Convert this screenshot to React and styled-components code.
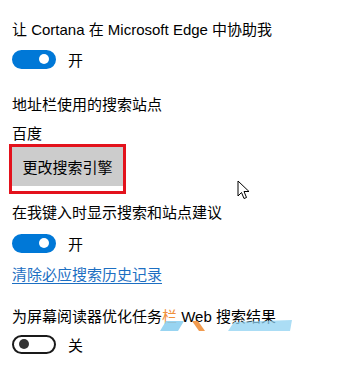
import React from 'react';
import styled, { createGlobalStyle } from 'styled-components';

const Global = createGlobalStyle`
  html, body {
    margin: 0;
    padding: 0;
    background: #fff;
  }
  body {
    font-family: "Liberation Sans", "Noto Sans CJK SC", sans-serif;
    color: #000;
  }
`;

const Page = styled.div`
  position: relative;
  width: 339px;
  height: 367px;
  overflow: hidden;
  padding: 20px 0 0 12px;
  box-sizing: border-box;
  display: flex;
  flex-direction: column;
  align-items: flex-start;
`;

const Label = styled.div`
  position: relative;
  font-size: 15px;
  line-height: 20px;
  height: 20px;
  white-space: nowrap;
  margin-top: ${(p) => p.$top || 0}px;
`;

const Row = styled.div`
  display: flex;
  align-items: center;
  gap: 12px;
  height: 20px;
  margin-top: ${(p) => p.$top || 0}px;
  font-size: 15px;
`;

const Track = styled.div`
  width: 44px;
  height: 19px;
  border-radius: 10px;
  box-sizing: border-box;
  display: flex;
  align-items: center;
  padding: 0 5px;
  justify-content: ${(p) => (p.$on ? 'flex-end' : 'flex-start')};
  background: ${(p) => (p.$on ? '#0078d7' : '#fff')};
  border: 2px solid ${(p) => (p.$on ? '#0078d7' : '#1a1a1a')};
`;

const Thumb = styled.span`
  width: 10px;
  height: 10px;
  border-radius: 50%;
  background: ${(p) => (p.$on ? '#fff' : '#333')};
`;

const Highlight = styled.div`
  margin-left: -3px;
  border: 3px solid #e3121c;
  padding-bottom: 5px;
  width: 111px;
`;

const Button = styled.div`
  height: 39px;
  background: #cccccc;
  display: flex;
  align-items: center;
  justify-content: center;
  font-size: 15px;
`;

const Link = styled.a`
  display: block;
  font-size: 15px;
  line-height: 20px;
  height: 20px;
  color: #1d6fc2;
  text-decoration: underline;
  text-underline-offset: 3px;
  margin-top: ${(p) => p.$top || 0}px;
`;

const Orange = styled.span`
  color: #f0903c;
`;

const Mark = styled.svg`
  position: absolute;
  left: 130px;
  top: 0;
  width: 160px;
  height: 28px;
  pointer-events: none;
`;

const Cursor = styled.svg`
  position: absolute;
  left: 237px;
  top: 180px;
  width: 13px;
  height: 20px;
`;

const ToggleRow = ({ on, top }) => (
  <Row $top={top}>
    <Track $on={on}>
      <Thumb $on={on} />
    </Track>
    {on ? '开' : '关'}
  </Row>
);

export default function App() {
  return (
    <>
      <Global />
      <Page>
        <Label>让 Cortana 在 Microsoft Edge 中协助我</Label>
        <ToggleRow on top={9} />
        <Label $top={26}>地址栏使用的搜索站点</Label>
        <Label $top={9}>百度</Label>
        <Highlight>
          <Button>更改搜索引擎</Button>
        </Highlight>
        <Label $top={9}>在我键入时显示搜索和站点建议</Label>
        <ToggleRow on top={10} />
        <Link $top={12}>清除必应搜索历史记录</Link>
        <Label $top={22}>
          为屏幕阅读器优化任务<Orange>栏</Orange> Web 搜索结果
          <Mark viewBox="0 0 160 28">
            <polygon points="24,14 42,14 36,24 18,24" fill="#86ccef" opacity="0.85" />
            <polygon points="50,14 56,14 63,24 57,24" fill="#f0903c" opacity="0.9" />
            <polygon points="92,15 150,13 148,24 86,24" fill="#8fd2f2" opacity="0.75" />
          </Mark>
        </Label>
        <ToggleRow on={false} top={7} />
        <Cursor viewBox="0 0 13 20">
          <path d="M1 1 L1 16 L4.5 12.5 L7 18.5 L9.5 17.5 L7 11.5 L12 11.5 Z" fill="#fff" stroke="#000" strokeWidth="1" strokeLinejoin="round" />
        </Cursor>
      </Page>
    </>
  );
}
